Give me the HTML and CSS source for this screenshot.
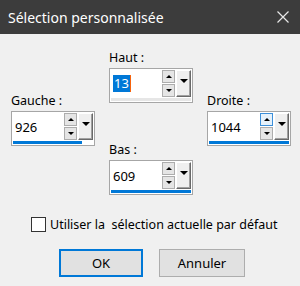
FILE: index.html
```html
<html>

<head>
    <title>Sélection personnalisée</title>
    <link rel="stylesheet" href="styles.css">
</head>

<body>
    <div class="titlebar">
        <span class="title">Sélection personnalisée</span>
        <svg class="close" width="12" height="12" viewBox="0 0 12 12">
            <path d="M0.5 0.5 L11.5 11.5 M11.5 0.5 L0.5 11.5" stroke="#e8e8e8" stroke-width="1.2" fill="none"/>
        </svg>
    </div>

    <div class="fields">
        <div class="col side">
            <div class="label">Gauche :</div>
            <div class="spin">
                <div class="spin-row">
                    <div class="value">926</div>
                    <div class="arrows"><span class="arrow"><i class="up"></i></span><span class="arrow"><i class="down"></i></span></div>
                    <span class="drop"><i></i></span>
                </div>
                <div class="bar"><div class="fill" style="width:86%"></div></div>
            </div>
        </div>

        <div class="col mid">
            <div class="label">Haut :</div>
            <div class="spin">
                <div class="spin-row">
                    <div class="value"><span class="sel">13</span><span class="caret"></span></div>
                    <div class="arrows"><span class="arrow"><i class="up"></i></span><span class="arrow"><i class="down"></i></span></div>
                    <span class="drop"><i></i></span>
                </div>
                <div class="bar empty"></div>
            </div>

            <div class="label low">Bas :</div>
            <div class="spin">
                <div class="spin-row">
                    <div class="value">609</div>
                    <div class="arrows"><span class="arrow"><i class="up"></i></span><span class="arrow"><i class="down"></i></span></div>
                    <span class="drop"><i></i></span>
                </div>
                <div class="bar"><div class="fill" style="width:100%"></div></div>
            </div>
        </div>

        <div class="col side">
            <div class="label">Droite :</div>
            <div class="spin">
                <div class="spin-row">
                    <div class="value">1044</div>
                    <div class="arrows"><span class="arrow hover"><i class="up"></i></span><span class="arrow"><i class="down"></i></span></div>
                    <span class="drop"><i></i></span>
                </div>
                <div class="bar"><div class="fill" style="width:100%"></div></div>
            </div>
        </div>
    </div>

    <label class="check"><span class="box"></span>Utiliser la&nbsp; sélection actuelle par défaut</label>

    <div class="buttons">
        <button class="btn default">OK</button>
        <button class="btn">Annuler</button>
    </div>
</body>

</html>
```

FILE: styles.css
```css
* {
    margin: 0;
    padding: 0;
    box-sizing: border-box;
}

body {
    width: 300px;
    height: 286px;
    background-color: #f0f0f0;
    font-family: 'Noto Sans', sans-serif;
    font-size: 12.5px;
    color: #000;
    overflow: hidden;
}

.titlebar {
    height: 34px;
    background-color: #3c3c3c;
    display: flex;
    align-items: center;
    padding-left: 8px;
    padding-right: 11px;
}
.title {
    flex: 1;
    color: #fff;
    font-size: 14px;
}
.close {
    display: block;
}

.fields {
    display: flex;
    gap: 14px;
    padding-left: 11px;
}
.col {
    width: 84px;
}
.side {
    margin-top: 59px;
}
.mid {
    margin-top: 16px;
}

.label {
    height: 16px;
    line-height: 16px;
    margin-bottom: 2px;
}
.label.low {
    margin-top: 39px;
}

.spin {
    height: 35px;
    background-color: #fff;
    border: 1px solid #a6a6a6;
    padding: 1px;
}
.spin-row {
    display: flex;
    height: 27px;
}
.value {
    flex: 1;
    display: flex;
    align-items: center;
    padding-left: 2px;
    font-size: 13px;
}
.sel {
    background-color: #0078d7;
    color: #fff;
    line-height: 17px;
    padding: 0 1px;
}
.caret {
    width: 1px;
    height: 17px;
    background-color: #f7630c;
}

.arrows {
    width: 13px;
    display: flex;
    flex-direction: column;
    gap: 1px;
    margin-right: 1px;
}
.arrow {
    flex: 1;
    background-color: #e5e5e5;
    border: 1px solid #adadad;
    display: flex;
    align-items: center;
    justify-content: center;
}
.arrow.hover {
    background-color: #e5f1fb;
    border-color: #3c8fd9;
}
.up {
    border-left: 3px solid transparent;
    border-right: 3px solid transparent;
    border-bottom: 3px solid #000;
}
.down {
    border-left: 3px solid transparent;
    border-right: 3px solid transparent;
    border-top: 3px solid #000;
}

.drop {
    width: 15px;
    background-color: #efefef;
    border: 1px solid;
    border-color: #fff #696969 #696969 #fff;
    box-shadow: inset -1px -1px #a0a0a0;
    display: flex;
    justify-content: center;
    padding-top: 8px;
}
.drop i {
    width: 0;
    height: 0;
    border-left: 4px solid transparent;
    border-right: 4px solid transparent;
    border-top: 4px solid #000;
}

.bar {
    height: 3px;
    margin-top: 1px;
}
.bar.empty {
    background-color: #e6e6e6;
}
.fill {
    height: 3px;
    background-color: #0078d7;
}

.check {
    display: flex;
    align-items: center;
    gap: 4px;
    margin-top: 21px;
    padding-left: 31px;
    height: 16px;
}
.box {
    width: 15px;
    height: 15px;
    border: 1px solid #333;
    background-color: #fff;
}

.buttons {
    display: flex;
    gap: 16px;
    padding-left: 59px;
    margin-top: 17px;
}
.btn {
    width: 86px;
    height: 28px;
    background-color: #e1e1e1;
    border: 1px solid #adadad;
    font-family: 'Noto Sans', sans-serif;
    font-size: 13px;
    color: #000;
}
.btn.default {
    width: 84px;
    border: 2px solid #0078d7;
}
```
